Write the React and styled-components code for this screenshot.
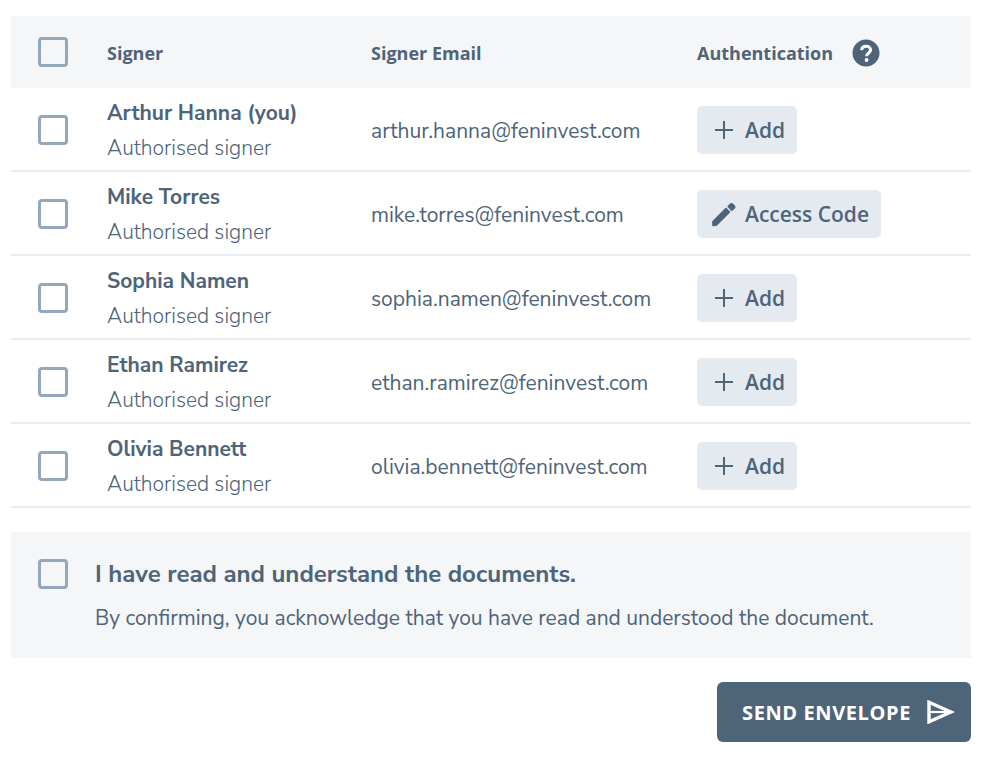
import React from "react";
import styled, { createGlobalStyle } from "styled-components";

const Global = createGlobalStyle`
  html, body { margin: 0; padding: 0; background: #fff; }
  body { font-family: "Nunito Sans", "Noto Sans", sans-serif; color: #4e6479; }
`;
const Page = styled.div`
  width: 960px;
  margin-left: 11px;
  padding-top: 16px;
  display: flex;
  flex-direction: column;
`;
const Grid = styled.div`
  display: grid;
  grid-template-columns: 96px 264px 326px 1fr;
  align-items: center;
`;
const HeadRow = styled(Grid)`
  height: 72px;
  background: #f5f6f8;
`;
const Row = styled(Grid)`
  height: 80px;
  padding-top: 2px;
  border-bottom: 2px solid #e8edf3;
  box-sizing: content-box;
`;
const CheckCell = styled.div`
  display: flex;
  padding-left: 27px;
`;
const Box = styled.span`
  display: block;
  width: 30px;
  height: 30px;
  box-sizing: border-box;
  border: 3px solid #94a8bd;
  border-radius: 4px;
`;
const HeadLabel = styled.div`
  font-family: "Open Sans", sans-serif;
  font-weight: 700;
  font-size: 18px;
  line-height: 28px;
  padding-top: 1px;
  color: #4e6479;
  display: flex;
  align-items: center;
  gap: 19px;
`;
const Name = styled.div`
  font-weight: 700;
  font-size: 21px;
  line-height: 34px;
`;
const Role = styled.div`
  font-size: 21px;
  line-height: 34px;
  font-weight: 300;
  margin: 1px 0 -1px;
`;
const Email = styled.div`
  font-size: 21px;
  line-height: 28px;
  padding-top: 2px;
`;
const Chip = styled.div`
  display: inline-flex;
  align-items: center;
  gap: 8px;
  height: 48px;
  padding: 0 12px 0 14px;
  background: #e5eaf1;
  border-radius: 5px;
  font-family: "Open Sans", sans-serif;
  font-size: 21px;
  font-weight: 550;
`;
const Panel = styled.div`
  margin-top: 24px;
  height: 126px;
  background: #f5f6f8;
  display: flex;
  padding: 27px 0 0 27px;
  box-sizing: border-box;
  gap: 27px;
`;
const PanelTitle = styled.div`
  font-weight: 700;
  font-size: 24px;
  line-height: 30px;
`;
const PanelText = styled.div`
  font-size: 21px;
  line-height: 26px;
  margin-top: 16px;
`;
const Footer = styled.div`
  display: flex;
  justify-content: flex-end;
  margin-top: 24px;
`;
const Send = styled.button`
  width: 254px;
  height: 60px;
  background: #4e6479;
  border: 0;
  border-radius: 6px;
  color: #fff;
  display: flex;
  align-items: center;
  justify-content: center;
  gap: 16px;
  font-family: "Open Sans", sans-serif;
  font-size: 20px;
  font-weight: 700;
  letter-spacing: 0.6px;
  padding: 0 0 0 9px;
`;

const Help = () => (
  <svg width="28" height="28" viewBox="0 0 28 28">
    <circle cx="14" cy="14" r="13.5" fill="#4e6479" />
    <path d="M9.6 11.2C9.8 8.6 11.8 7.2 14.2 7.2C16.8 7.2 18.6 8.8 18.6 11C18.6 14 14.6 14 14.6 17.2" fill="none" stroke="#fff" strokeWidth="3" />
    <circle cx="14.6" cy="21" r="1.9" fill="#fff" />
  </svg>
);
const Plus = () => (
  <svg width="26" height="26" viewBox="0 0 26 26" fill="#4e6479">
    <path d="M4 12H12V4H14V12H22V14H14V22H12V14H4Z" />
  </svg>
);
const Pencil = () => (
  <svg width="26" height="26" viewBox="0 0 26 26" fill="#4e6479" stroke="#4e6479" strokeWidth="1.6" strokeLinejoin="round">
    <path d="M2 20.5L15 7.5L18.5 11L5.5 24L2 24.5Z" />
    <path d="M17.2 5.5L19.5 3.2A1.5 1.5 0 0 1 21.5 3.2L23.3 5A1.5 1.5 0 0 1 23.3 7L20.8 9.2Z" />
  </svg>
);
const Plane = () => (
  <svg width="28" height="24" viewBox="0 0 28 24" fill="none" stroke="#fff">
    <path d="M2 2.2L24 12L2 21.8Z" strokeWidth="3.4" />
    <path d="M2 12H24" strokeWidth="2.2" />
  </svg>
);

const people = [
  ["Arthur Hanna (you)", "arthur.hanna@feninvest.com", false],
  ["Mike Torres", "mike.torres@feninvest.com", true],
  ["Sophia Namen", "sophia.namen@feninvest.com", false],
  ["Ethan Ramirez", "ethan.ramirez@feninvest.com", false],
  ["Olivia Bennett", "olivia.bennett@feninvest.com", false],
];

export default function App() {
  return (
    <Page>
      <Global />
      <HeadRow>
        <CheckCell><Box /></CheckCell>
        <HeadLabel>Signer</HeadLabel>
        <HeadLabel>Signer Email</HeadLabel>
        <HeadLabel>Authentication <Help /></HeadLabel>
      </HeadRow>
      {people.map(([n, e, code]) => (
        <Row key={e}>
          <CheckCell><Box /></CheckCell>
          <div>
            <Name>{n}</Name>
            <Role>Authorised signer</Role>
          </div>
          <Email>{e}</Email>
          <div>
            <Chip>{code ? <Pencil /> : <Plus />}{code ? "Access Code" : "Add"}</Chip>
          </div>
        </Row>
      ))}
      <Panel>
        <Box />
        <div>
          <PanelTitle>I have read and understand the documents.</PanelTitle>
          <PanelText>By confirming, you acknowledge that you have read and understood the document.</PanelText>
        </div>
      </Panel>
      <Footer>
        <Send>SEND ENVELOPE <Plane /></Send>
      </Footer>
    </Page>
  );
}
